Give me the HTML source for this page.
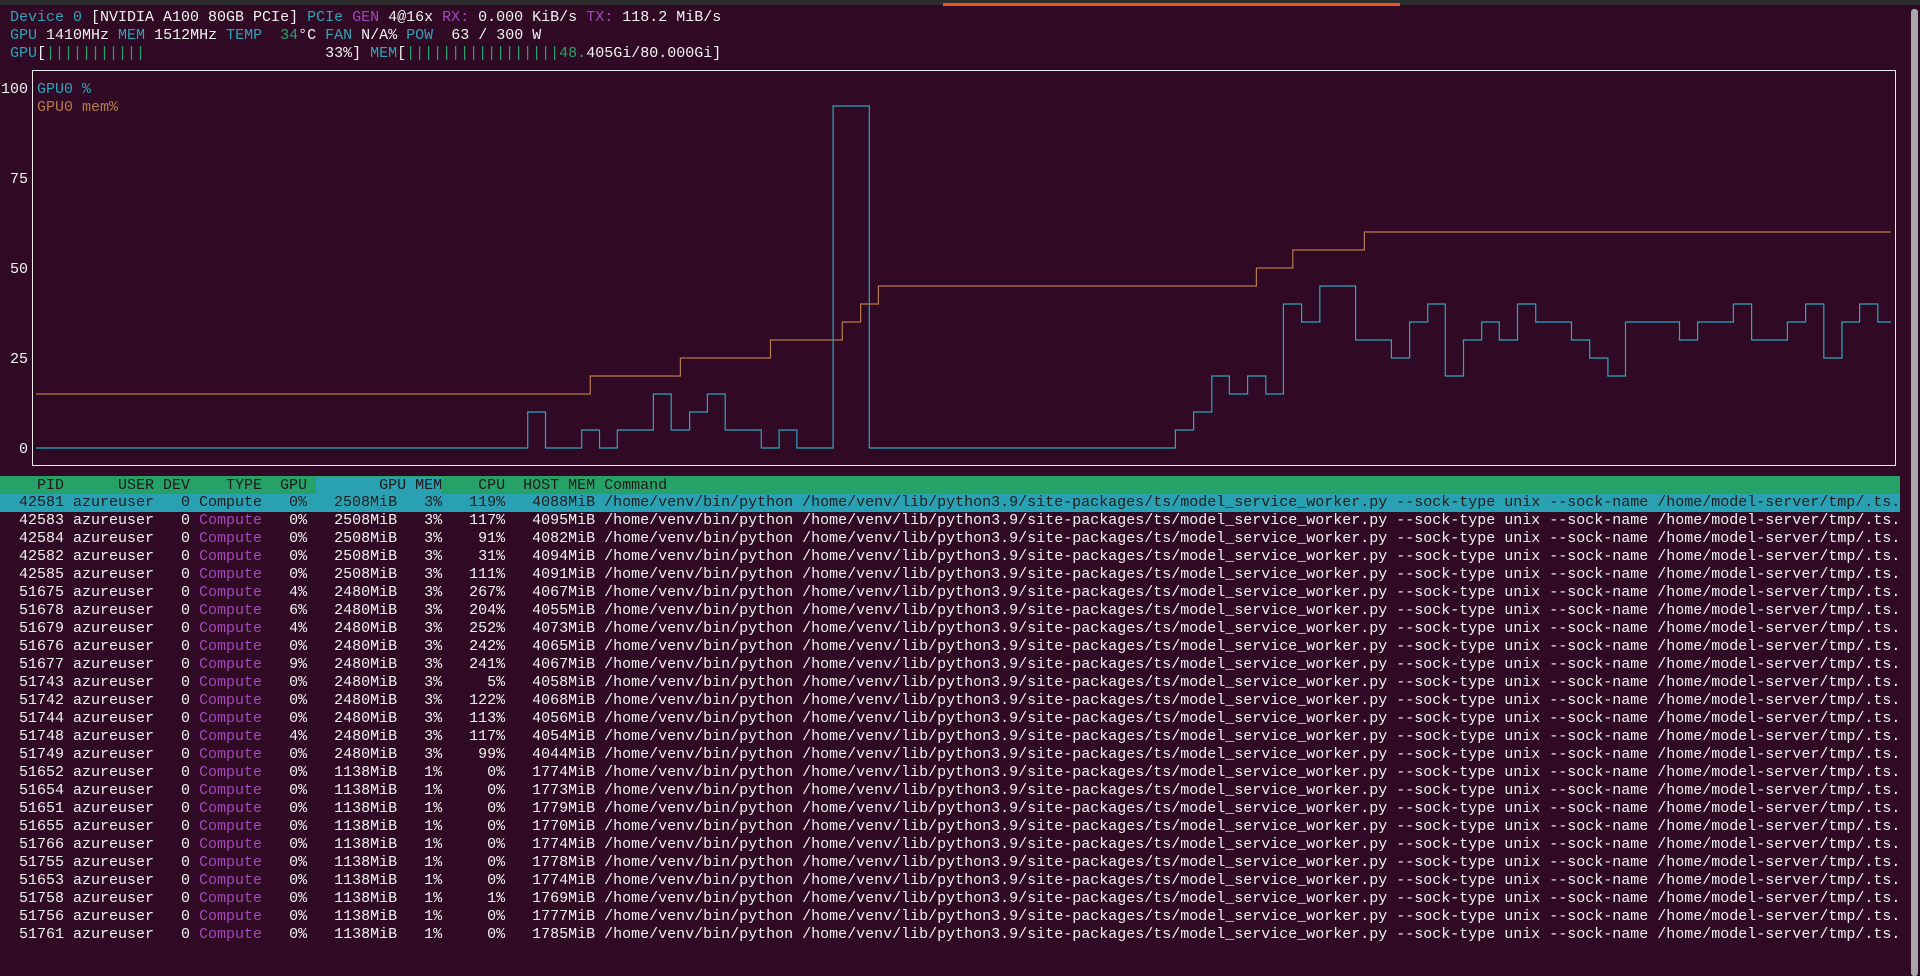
<!DOCTYPE html>
<html><head><meta charset="utf-8"><style>
html,body{margin:0;padding:0;background:#300a24;width:1920px;height:976px;overflow:hidden}
#top{position:absolute;left:0;top:0;width:1920px;height:5px;background:#2c2c2c}
#orange{position:absolute;left:943px;top:3px;width:457px;height:3px;background:#e95420}
.l{position:absolute;left:1px;margin:0;font-family:"Liberation Mono",monospace;font-size:15px;line-height:18px;height:18px;white-space:pre;color:#f2f2f2}
.c{color:#2fa3b8}.p{color:#a347ba}.g{color:#26a269}.o{color:#b5794a}
#hdr{background:#26a269;color:#1a1a1a;width:1899px;left:0;padding-left:1px}
.t{background:#2aa1b3}
#sel{background:#2aa1b3;color:#1f1f1f;width:1899px;left:0;padding-left:1px}
#sb{position:absolute;left:1911px;top:9px;width:7px;height:967px;background:#a8a8a8;border-radius:3px}
svg{position:absolute;left:0;top:0}
</style></head><body>
<div id="top"></div><div id="orange"></div>
<pre class="l" style="top:9px"> <span class="c">Device 0</span> [NVIDIA A100 80GB PCIe] <span class="c">PCIe</span> <span class="p">GEN</span> 4@16x <span class="p">RX:</span> 0.000 KiB/s <span class="p">TX:</span> 118.2 MiB/s</pre>
<pre class="l" style="top:27px"> <span class="c">GPU</span> 1410MHz <span class="c">MEM</span> 1512MHz <span class="c">TEMP</span>  <span class="g">34</span>°C <span class="c">FAN</span> N/A% <span class="c">POW</span>  63 / 300 W</pre>
<pre class="l" style="top:45px"> <span class="c">GPU</span>[<span class="g">|||||||||||</span>                    33%] <span class="c">MEM</span>[<span class="g">|||||||||||||||||48.</span>405Gi/80.000Gi]</pre>

<svg width="1920" height="976" xmlns="http://www.w3.org/2000/svg">
<rect x="32.5" y="70.5" width="1863" height="395" fill="none" stroke="#e8e8e8" stroke-width="1"/>
<polyline fill="none" stroke="#b5794a" stroke-width="1.2" points="36,394 590.3,394 590.3,376 680.4,376 680.4,358 770.5,358 770.5,340 842.3,340 842.3,322 860.6,322 860.6,304 878.4,304 878.4,286 1256.4,286 1256.4,268 1292.8,268 1292.8,250 1364.4,250 1364.4,232 1891,232"/>
<polyline fill="none" stroke="#2aa6ba" stroke-width="1.2" points="36,448 527.7,448 527.7,412 545.5,412 545.5,448 581.7,448 581.7,430 599.5,430 599.5,448 617.3,448 617.3,430 653.4,430 653.4,394 671.2,394 671.2,430 689.6,430 689.6,412 707.4,412 707.4,394 725.2,394 725.2,430 761.3,430 761.3,448 779.1,448 779.1,430 796.9,430 796.9,448 833.1,448 833.1,106 869.3,106 869.3,448 1175.4,448 1175.4,430 1193.6,430 1193.6,412 1211.8,412 1211.8,376 1229.4,376 1229.4,394 1247.6,394 1247.6,376 1265.8,376 1265.8,394 1283.4,394 1283.4,304 1301.6,304 1301.6,322 1319.8,322 1319.8,286 1355.6,286 1355.6,340 1391.4,340 1391.4,358 1409.6,358 1409.6,322 1427.7,322 1427.7,304 1445.3,304 1445.3,376 1463.5,376 1463.5,340 1481.7,340 1481.7,322 1499.3,322 1499.3,340 1517.5,340 1517.5,304 1535.7,304 1535.7,322 1571.5,322 1571.5,340 1589.7,340 1589.7,358 1607.9,358 1607.9,376 1625.5,376 1625.5,322 1679.5,322 1679.5,340 1697.6,340 1697.6,322 1733.4,322 1733.4,304 1751.6,304 1751.6,340 1787.4,340 1787.4,322 1805.6,322 1805.6,304 1823.8,304 1823.8,358 1842,358 1842,322 1859.6,322 1859.6,304 1877.8,304 1877.8,322 1891,322"/>
</svg>
<pre class="l" style="top:81px">100 <span class="c">GPU0 %</span></pre>
<pre class="l" style="top:99px">    <span class="o">GPU0 mem%</span></pre>
<pre class="l" style="top:171px"> 75</pre>
<pre class="l" style="top:261px"> 50</pre>
<pre class="l" style="top:351px"> 25</pre>
<pre class="l" style="top:441px">  0</pre>

<pre class="l" id="hdr" style="top:476px;padding-top:1px;height:17px;line-height:17px">    PID      USER DEV    TYPE  GPU <span class="t">       GPU MEM</span>    CPU  HOST MEM Command                                                                                                                                             </pre>
<pre class="l" id="sel" style="top:494px">  42581 azureuser   0 Compute   0%   2508MiB   3%   119%   4088MiB /home/venv/bin/python /home/venv/lib/python3.9/site-packages/ts/model_service_worker.py --sock-type unix --sock-name /home/model-server/tmp/.ts.</pre>
<pre class="l" style="top:512px">  42583 azureuser   0 <span class="p">Compute</span>   0%   2508MiB   3%   117%   4095MiB /home/venv/bin/python /home/venv/lib/python3.9/site-packages/ts/model_service_worker.py --sock-type unix --sock-name /home/model-server/tmp/.ts.</pre>
<pre class="l" style="top:530px">  42584 azureuser   0 <span class="p">Compute</span>   0%   2508MiB   3%    91%   4082MiB /home/venv/bin/python /home/venv/lib/python3.9/site-packages/ts/model_service_worker.py --sock-type unix --sock-name /home/model-server/tmp/.ts.</pre>
<pre class="l" style="top:548px">  42582 azureuser   0 <span class="p">Compute</span>   0%   2508MiB   3%    31%   4094MiB /home/venv/bin/python /home/venv/lib/python3.9/site-packages/ts/model_service_worker.py --sock-type unix --sock-name /home/model-server/tmp/.ts.</pre>
<pre class="l" style="top:566px">  42585 azureuser   0 <span class="p">Compute</span>   0%   2508MiB   3%   111%   4091MiB /home/venv/bin/python /home/venv/lib/python3.9/site-packages/ts/model_service_worker.py --sock-type unix --sock-name /home/model-server/tmp/.ts.</pre>
<pre class="l" style="top:584px">  51675 azureuser   0 <span class="p">Compute</span>   4%   2480MiB   3%   267%   4067MiB /home/venv/bin/python /home/venv/lib/python3.9/site-packages/ts/model_service_worker.py --sock-type unix --sock-name /home/model-server/tmp/.ts.</pre>
<pre class="l" style="top:602px">  51678 azureuser   0 <span class="p">Compute</span>   6%   2480MiB   3%   204%   4055MiB /home/venv/bin/python /home/venv/lib/python3.9/site-packages/ts/model_service_worker.py --sock-type unix --sock-name /home/model-server/tmp/.ts.</pre>
<pre class="l" style="top:620px">  51679 azureuser   0 <span class="p">Compute</span>   4%   2480MiB   3%   252%   4073MiB /home/venv/bin/python /home/venv/lib/python3.9/site-packages/ts/model_service_worker.py --sock-type unix --sock-name /home/model-server/tmp/.ts.</pre>
<pre class="l" style="top:638px">  51676 azureuser   0 <span class="p">Compute</span>   0%   2480MiB   3%   242%   4065MiB /home/venv/bin/python /home/venv/lib/python3.9/site-packages/ts/model_service_worker.py --sock-type unix --sock-name /home/model-server/tmp/.ts.</pre>
<pre class="l" style="top:656px">  51677 azureuser   0 <span class="p">Compute</span>   9%   2480MiB   3%   241%   4067MiB /home/venv/bin/python /home/venv/lib/python3.9/site-packages/ts/model_service_worker.py --sock-type unix --sock-name /home/model-server/tmp/.ts.</pre>
<pre class="l" style="top:674px">  51743 azureuser   0 <span class="p">Compute</span>   0%   2480MiB   3%     5%   4058MiB /home/venv/bin/python /home/venv/lib/python3.9/site-packages/ts/model_service_worker.py --sock-type unix --sock-name /home/model-server/tmp/.ts.</pre>
<pre class="l" style="top:692px">  51742 azureuser   0 <span class="p">Compute</span>   0%   2480MiB   3%   122%   4068MiB /home/venv/bin/python /home/venv/lib/python3.9/site-packages/ts/model_service_worker.py --sock-type unix --sock-name /home/model-server/tmp/.ts.</pre>
<pre class="l" style="top:710px">  51744 azureuser   0 <span class="p">Compute</span>   0%   2480MiB   3%   113%   4056MiB /home/venv/bin/python /home/venv/lib/python3.9/site-packages/ts/model_service_worker.py --sock-type unix --sock-name /home/model-server/tmp/.ts.</pre>
<pre class="l" style="top:728px">  51748 azureuser   0 <span class="p">Compute</span>   4%   2480MiB   3%   117%   4054MiB /home/venv/bin/python /home/venv/lib/python3.9/site-packages/ts/model_service_worker.py --sock-type unix --sock-name /home/model-server/tmp/.ts.</pre>
<pre class="l" style="top:746px">  51749 azureuser   0 <span class="p">Compute</span>   0%   2480MiB   3%    99%   4044MiB /home/venv/bin/python /home/venv/lib/python3.9/site-packages/ts/model_service_worker.py --sock-type unix --sock-name /home/model-server/tmp/.ts.</pre>
<pre class="l" style="top:764px">  51652 azureuser   0 <span class="p">Compute</span>   0%   1138MiB   1%     0%   1774MiB /home/venv/bin/python /home/venv/lib/python3.9/site-packages/ts/model_service_worker.py --sock-type unix --sock-name /home/model-server/tmp/.ts.</pre>
<pre class="l" style="top:782px">  51654 azureuser   0 <span class="p">Compute</span>   0%   1138MiB   1%     0%   1773MiB /home/venv/bin/python /home/venv/lib/python3.9/site-packages/ts/model_service_worker.py --sock-type unix --sock-name /home/model-server/tmp/.ts.</pre>
<pre class="l" style="top:800px">  51651 azureuser   0 <span class="p">Compute</span>   0%   1138MiB   1%     0%   1779MiB /home/venv/bin/python /home/venv/lib/python3.9/site-packages/ts/model_service_worker.py --sock-type unix --sock-name /home/model-server/tmp/.ts.</pre>
<pre class="l" style="top:818px">  51655 azureuser   0 <span class="p">Compute</span>   0%   1138MiB   1%     0%   1770MiB /home/venv/bin/python /home/venv/lib/python3.9/site-packages/ts/model_service_worker.py --sock-type unix --sock-name /home/model-server/tmp/.ts.</pre>
<pre class="l" style="top:836px">  51766 azureuser   0 <span class="p">Compute</span>   0%   1138MiB   1%     0%   1774MiB /home/venv/bin/python /home/venv/lib/python3.9/site-packages/ts/model_service_worker.py --sock-type unix --sock-name /home/model-server/tmp/.ts.</pre>
<pre class="l" style="top:854px">  51755 azureuser   0 <span class="p">Compute</span>   0%   1138MiB   1%     0%   1778MiB /home/venv/bin/python /home/venv/lib/python3.9/site-packages/ts/model_service_worker.py --sock-type unix --sock-name /home/model-server/tmp/.ts.</pre>
<pre class="l" style="top:872px">  51653 azureuser   0 <span class="p">Compute</span>   0%   1138MiB   1%     0%   1774MiB /home/venv/bin/python /home/venv/lib/python3.9/site-packages/ts/model_service_worker.py --sock-type unix --sock-name /home/model-server/tmp/.ts.</pre>
<pre class="l" style="top:890px">  51758 azureuser   0 <span class="p">Compute</span>   0%   1138MiB   1%     1%   1769MiB /home/venv/bin/python /home/venv/lib/python3.9/site-packages/ts/model_service_worker.py --sock-type unix --sock-name /home/model-server/tmp/.ts.</pre>
<pre class="l" style="top:908px">  51756 azureuser   0 <span class="p">Compute</span>   0%   1138MiB   1%     0%   1777MiB /home/venv/bin/python /home/venv/lib/python3.9/site-packages/ts/model_service_worker.py --sock-type unix --sock-name /home/model-server/tmp/.ts.</pre>
<pre class="l" style="top:926px">  51761 azureuser   0 <span class="p">Compute</span>   0%   1138MiB   1%     0%   1785MiB /home/venv/bin/python /home/venv/lib/python3.9/site-packages/ts/model_service_worker.py --sock-type unix --sock-name /home/model-server/tmp/.ts.</pre>
<div id="sb"></div>
</body></html>
